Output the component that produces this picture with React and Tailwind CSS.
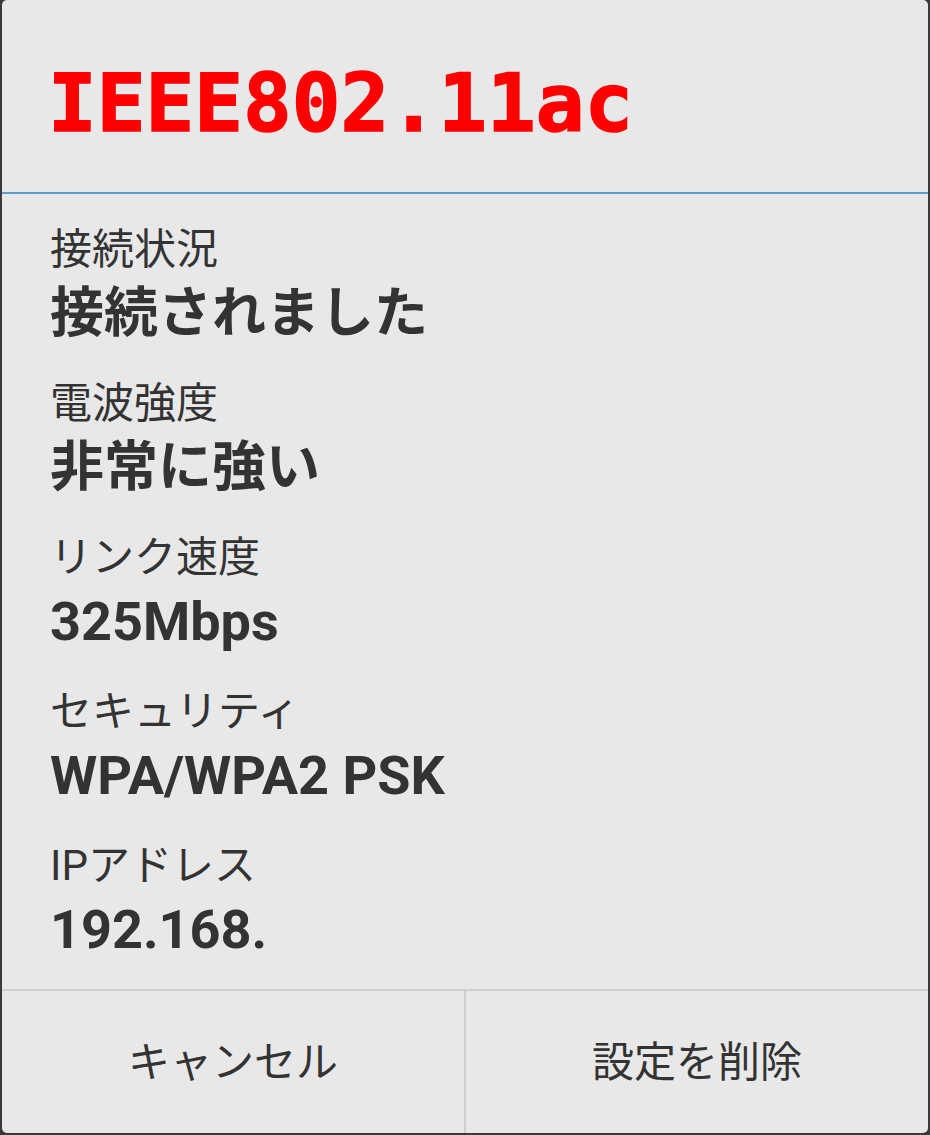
import React from "react";

const rows = [
  { label: "接続状況", value: "接続されました" },
  { label: "電波強度", value: "非常に強い" },
  { label: "リンク速度", value: "325Mbps" },
  { label: "セキュリティ", value: "WPA/WPA2 PSK" },
  { label: "IPアドレス", value: "192.168." },
];

const jp = { fontFamily: 'Roboto, "Noto Sans CJK JP", sans-serif' };

export default function App() {
  return (
    <div className="w-[930px] h-[1135px] bg-[#3a3a3a] px-[2px] pb-[2px]">
      <div className="h-full flex flex-col bg-[#e8e8e8] rounded-[5px] overflow-hidden text-[#333333]" style={jp}>
        <div className="shrink-0 h-[194px] flex items-center pt-[14px] px-[46px] border-b-2 border-[#5b9bd0]">
          <h1
            className="text-[81px] leading-none font-bold text-[#ff0000] [-webkit-text-stroke:1.5px_#ff0000]"
            style={{ fontFamily: '"DejaVu Sans Mono", monospace' }}
          >
            IEEE802.11ac
          </h1>
        </div>

        <div className="flex-1 min-h-0 flex flex-col pt-[35px] px-[48px]">
          {rows.map((r) => (
            <div key={r.label} className="flex flex-col mb-[42px] last:mb-0">
              <span className="text-[42px] leading-[42px]">{r.label}</span>
              <span className="mt-[16px] text-[54px] leading-[54px] font-bold whitespace-nowrap">{r.value}</span>
            </div>
          ))}
        </div>

        <div className="shrink-0 h-[144px] flex border-t-2 border-[#cfcfcf]">
          <button className="flex-1 flex items-center justify-center text-[42px] text-[#333333] border-r-2 border-[#cfcfcf]">
            キャンセル
          </button>
          <button className="flex-1 flex items-center justify-center text-[42px] text-[#333333]">
            設定を削除
          </button>
        </div>
      </div>
    </div>
  );
}
